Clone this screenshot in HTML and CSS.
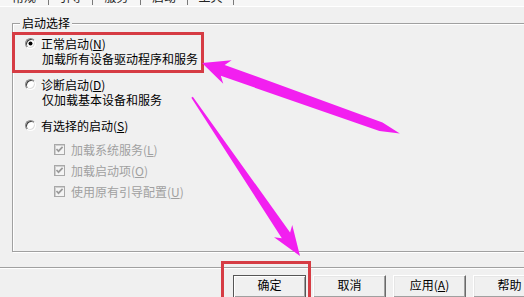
FILE: index.html
```html
<!DOCTYPE html>
<html lang="zh-CN">
<head>
  <meta charset="UTF-8">
  <meta name="viewport" content="width=device-width, initial-scale=1">
  <title>系统配置</title>
  <link rel="stylesheet" href="styles.css">
</head>
<body>

  <!-- 选项卡 (上边被截掉) -->
  <div class="tabs">
    <div class="tab tab-1">常规</div>
    <div class="tab tab-2">引导</div>
    <div class="tab tab-3">服务</div>
    <div class="tab tab-4">启动</div>
    <div class="tab tab-5">工具</div>
  </div>

  <!-- 启动选择 -->
  <div class="group">
    <span class="group-title">启动选择</span>

    <div class="option first">
      <span class="radio checked"></span>
      <span>正常启动(<u>N</u>)</span>
    </div>
    <div class="option-desc">加载所有设备驱动程序和服务</div>

    <div class="option">
      <span class="radio"></span>
      <span>诊断启动(<u>D</u>)</span>
    </div>
    <div class="option-desc">仅加载基本设备和服务</div>

    <div class="option">
      <span class="radio"></span>
      <span>有选择的启动(<u>S</u>)</span>
    </div>

    <div class="check first-check">
      <span class="box"><svg viewBox="0 0 9 9"><path d="M1.5 4 L3.5 6.2 L7.6 1.8"/></svg></span>
      <span>加载系统服务(<u>L</u>)</span>
    </div>
    <div class="check">
      <span class="box"><svg viewBox="0 0 9 9"><path d="M1.5 4 L3.5 6.2 L7.6 1.8"/></svg></span>
      <span>加载启动项(<u>O</u>)</span>
    </div>
    <div class="check">
      <span class="box"><svg viewBox="0 0 9 9"><path d="M1.5 4 L3.5 6.2 L7.6 1.8"/></svg></span>
      <span>使用原有引导配置(<u>U</u>)</span>
    </div>
  </div>

  <!-- 按钮 -->
  <div class="footer">
    <button class="btn btn-default">确定</button>
    <button class="btn">取消</button>
    <button class="btn">应用(<u>A</u>)</button>
    <button class="btn">帮助</button>
  </div>

  <!-- 标注: 红框 + 箭头 -->
  <div class="mark mark-option"></div>
  <div class="mark mark-ok"></div>

  <svg class="arrows" width="524" height="297" viewBox="0 0 524 297">
    <polygon transform="translate(202 63) rotate(199.6)"
             points="0,0 -27,-12.5 -22,-5.8 -190,-4.6 -210,0 -190,4.6 -22,5.8 -27,12.5"/>
    <polygon transform="translate(300 256) rotate(55.8)"
             points="0,0 -30,-11 -25,-5 -192,-0.9 -192,0.9 -25,5 -30,11"/>
  </svg>

</body>
</html>
```

FILE: styles.css
```css
/* RESET */
* {
  margin: 0;
  padding: 0;
  box-sizing: border-box;
}

body {
  position: relative;
  width: 524px;
  height: 297px;
  overflow: hidden;
  background: #f0f0f0;
  color: #000;
  font-family: "Noto Sans CJK SC", "Liberation Sans", sans-serif;
  font-size: 12px;
}

u {
  text-decoration: underline;
  text-underline-offset: 1px;
}

/* 选项卡 */
.tabs {
  display: flex;
  height: 7px;
  overflow: hidden;
  background: #f6f6f6;
  border-bottom: 1px solid #fff;
}

.tab {
  height: 16px;
  margin-top: -11px;
  line-height: 16px;
  text-align: center;
  color: #222;
  border-right: 1px solid #7a7a7a;
}

.tab-1 { width: 49px; }
.tab-2 { width: 44px; }
.tab-3 { width: 48px; }
.tab-4 { width: 47px; }
.tab-5 { width: 46px; }

/* 分组框 */
.group {
  width: 530px;
  height: 229px;
  margin: 16px 0 0 12px;
  border: 1px solid #a0a0a0;
  box-shadow: inset 1px 1px 0 #fff, 1px 1px 0 #fff;
}

.group-title {
  display: block;
  width: max-content;
  margin: -9px 0 0 7px;
  padding: 0 2px;
  line-height: 16px;
  background: #f0f0f0;
}

.option {
  display: flex;
  align-items: center;
  height: 16px;
  margin-top: 9px;
  padding-left: 12px;
}

.option.first {
  margin-top: 4px;
}

.option-desc {
  padding-left: 29px;
  line-height: 16px;
}

.radio {
  position: relative;
  width: 11px;
  height: 11px;
  margin-right: 5px;
  border-radius: 50%;
  border: 1px solid;
  border-color: #8a8a8a #fff #fff #8a8a8a;
  background: #fff;
  box-shadow: inset 1px 1px 0 #404040, inset -1px -1px 0 #dcdcdc;
}

.radio.checked::after {
  content: "";
  position: absolute;
  top: 3px;
  left: 3px;
  width: 3px;
  height: 3px;
  border-radius: 50%;
  background: #000;
  box-shadow: 0 0 0 0.5px #000;
}

/* 复选框 (已禁用) */
.check {
  display: flex;
  align-items: center;
  height: 16px;
  margin-top: 5px;
  padding-left: 41px;
  color: #a0a0a0;
}

.check.first-check {
  margin-top: 8px;
}

.box {
  display: flex;
  align-items: center;
  justify-content: center;
  width: 11px;
  height: 11px;
  margin-right: 6px;
  border: 1px solid #a8a8a8;
  background: #f4f4f4;
  box-shadow: inset 1px 1px 0 #d0d0d0;
}

.box svg {
  width: 9px;
  height: 9px;
  fill: none;
  stroke: #9a9a9a;
  stroke-width: 1.7;
}

/* 按钮 */
.footer {
  display: flex;
  gap: 7px;
  margin-top: 15px;
  padding: 7px 0 0 233px;
  border-top: 1px solid #a0a0a0;
  box-shadow: inset 0 1px 0 #fff;
}

.btn {
  flex: 0 0 73px;
  height: 23px;
  padding-bottom: 4px;
  font: inherit;
  color: #000;
  background: #f0f0f0;
  border: 1px solid;
  border-color: #fff #6a6a6a #6a6a6a #fff;
  box-shadow: inset -1px -1px 0 #a0a0a0, inset 1px 1px 0 #e6e6e6;
}

.btn-default {
  border-color: #555;
  box-shadow: inset 1px 1px 0 #fff, inset -1px -1px 0 #a0a0a0;
}

/* 标注 */
.mark {
  position: absolute;
  border: 3px solid #d63c44;
}

.mark-option {
  left: 12px;
  top: 32px;
  width: 192px;
  height: 41px;
}

.mark-ok {
  left: 221px;
  top: 261px;
  width: 90px;
  height: 46px;
}

.arrows {
  position: absolute;
  top: 0;
  left: 0;
  fill: #f21ff0;
  pointer-events: none;
}
```
